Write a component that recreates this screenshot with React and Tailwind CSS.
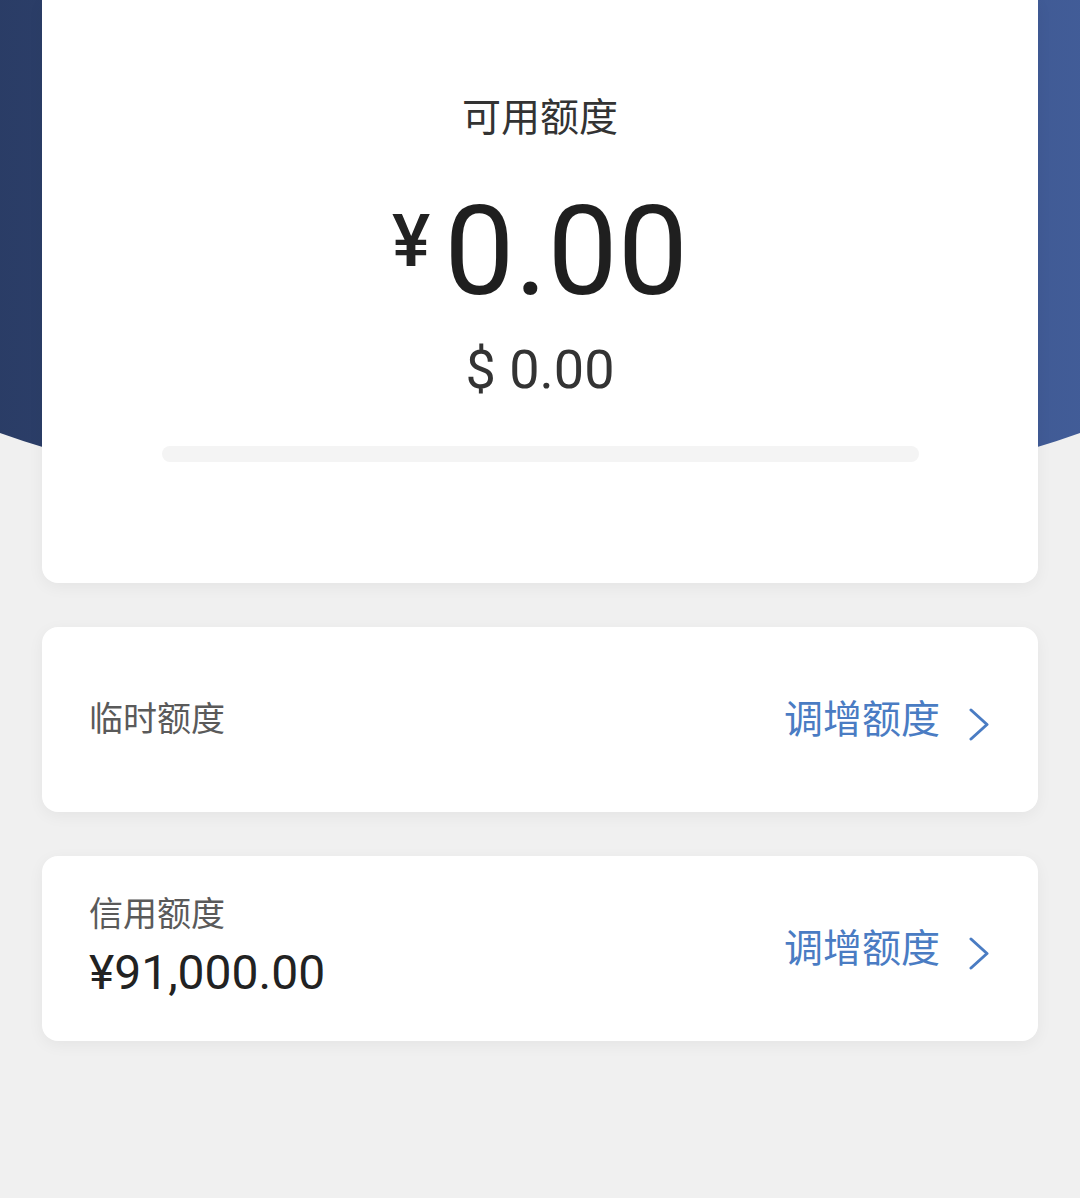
export default function App() {
  return (
    <div className="relative min-h-[1198px] overflow-hidden bg-[#f0f0f0] [font-family:Roboto,'Noto_Sans_CJK_SC',sans-serif]">
      {/* curved blue header background */}
      <div className="absolute top-0 left-[-160px] h-[509px] w-[1400px] rounded-bl-[700px_209px] rounded-br-[700px_209px] bg-linear-to-r from-[#27385f] to-[#45619f]" />

      <div className="relative flex flex-col gap-[44px] px-[42px]">
        {/* available balance card */}
        <div className="flex h-[583px] flex-col items-center rounded-b-[16px] bg-white pt-[95px] shadow-[0_4px_16px_rgba(0,0,0,0.05)]">
          <div className="text-[39px] leading-none text-[#333] [font-family:'Noto_Sans_CJK_SC',sans-serif]">
            可用额度
          </div>
          <div className="mt-[55px] flex items-start justify-center">
            <span className="mt-[17px] mr-[14px] text-[72px] font-medium leading-none text-[#222]">¥</span>
            <span className="text-[125px] leading-none text-[#1f1f1f]">0.00</span>
          </div>
          <div className="mt-[29px] text-[54px] leading-none text-[#333]">$ 0.00</div>
          <div className="mt-[49px] h-[16px] w-[757px] rounded-full bg-[#f4f4f4]" />
        </div>

        <LimitCard label="临时额度" />
        <LimitCard label="信用额度" amount="¥91,000.00" />
      </div>
    </div>
  );
}

function LimitCard({ label, amount }) {
  return (
    <div className="flex h-[185px] items-center justify-between rounded-[16px] bg-white pb-[6px] pl-[47px] pr-[48px] shadow-[0_4px_16px_rgba(0,0,0,0.05)]">
      <div className="flex flex-col">
        <span className="text-[34px] leading-none text-[#5a5a5a] [font-family:'Noto_Sans_CJK_SC',sans-serif]">
          {label}
        </span>
        {amount && (
          <span className="mt-[20px] text-[48px] leading-none text-[#222]">{amount}</span>
        )}
      </div>
      <div className="flex items-center gap-[28px]">
        <span className="text-[39px] leading-none text-[#4a7cc3] [font-family:'Noto_Sans_CJK_SC',sans-serif]">
          调增额度
        </span>
        <svg width="22" height="34" viewBox="0 0 22 34" className="mt-[16px]">
          <polyline
            points="3,2 19,16.5 3,31"
            fill="none"
            stroke="#4a7cc3"
            strokeWidth="3"
            strokeLinecap="round"
            strokeLinejoin="round"
          />
        </svg>
      </div>
    </div>
  );
}
